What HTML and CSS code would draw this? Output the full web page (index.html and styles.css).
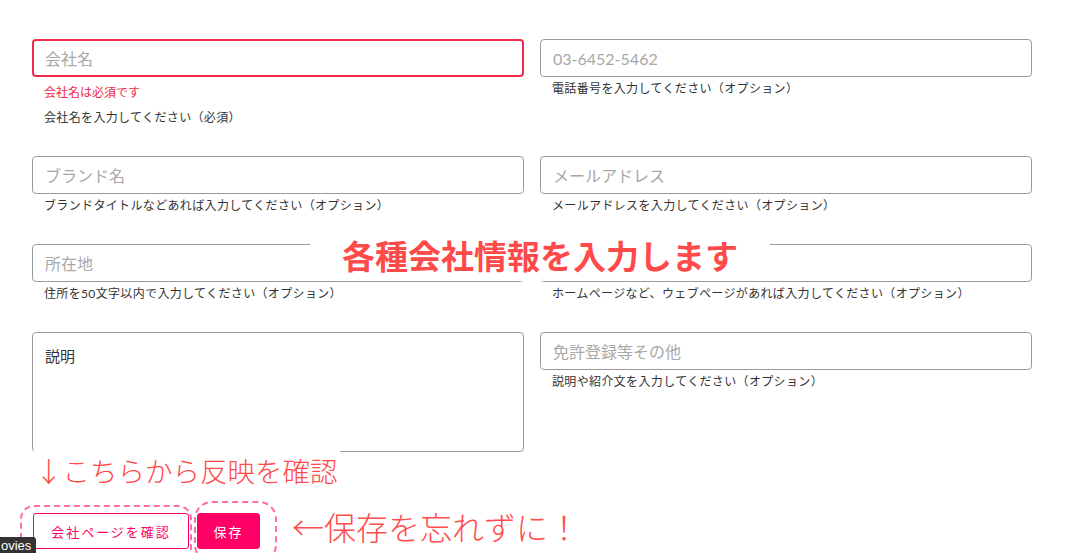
FILE: index.html
```html
<!DOCTYPE html>
<html lang="ja">
<head>
    <meta name="viewport" content="width=device-width,initial-scale=1.0">
    <title>会社情報</title>
    <link rel="stylesheet" href="styles.css">
</head>
<body>

    <div class="page">
        <form class="company-form">
            <div class="field">
                <input class="input is-error" type="text" placeholder="会社名">
                <p class="error">会社名は必須です</p>
                <p class="help help-after-error">会社名を入力してください（必須）</p>
            </div>
            <div class="field">
                <input class="input" type="text" placeholder="03-6452-5462">
                <p class="help">電話番号を入力してください（オプション）</p>
            </div>

            <div class="field">
                <input class="input" type="text" placeholder="ブランド名">
                <p class="help">ブランドタイトルなどあれば入力してください（オプション）</p>
            </div>
            <div class="field">
                <input class="input" type="text" placeholder="メールアドレス">
                <p class="help">メールアドレスを入力してください（オプション）</p>
            </div>

            <div class="field">
                <input class="input" type="text" placeholder="所在地">
                <p class="help">住所を50文字以内で入力してください（オプション）</p>
            </div>
            <div class="field">
                <input class="input" type="text" placeholder="">
                <p class="help">ホームページなど、ウェブページがあれば入力してください（オプション）</p>
            </div>

            <div class="field">
                <textarea class="input textarea">説明</textarea>
            </div>
            <div class="field">
                <input class="input" type="text" placeholder="免許登録等その他">
                <p class="help">説明や紹介文を入力してください（オプション）</p>
            </div>
        </form>

        <div class="actions">
            <button class="btn btn-outline" type="button">会社ページを確認</button>
            <button class="btn btn-primary" type="button">保存</button>
            <span class="note note-save">←保存を忘れずに！</span>
        </div>

        <!-- annotations laid over the form -->
        <div class="callout callout-main">各種会社情報を入力します</div>
        <div class="callout callout-check">↓こちらから反映を確認</div>
        <div class="ring ring-check"></div>
        <div class="ring ring-save"></div>
        <div class="tooltip">ovies</div>
    </div>

</body>
</html>
```

FILE: styles.css
```css
body {
    margin: 0;
    background: #fff;
    font-family: Lato, "Noto Sans CJK JP", sans-serif;
    color: #333;
}

.page {
    position: relative;
    padding: 39px 48px 0 32px;
    height: 553px;
    box-sizing: border-box;
    overflow: hidden;
}

.company-form {
    display: grid;
    grid-template-columns: 492px 492px;
    column-gap: 16px;
    row-gap: 28px;
}

.field p {
    margin: 0;
}

.input {
    display: block;
    width: 100%;
    height: 38px;
    box-sizing: border-box;
    padding: 0 12px;
    border: 1px solid #9a9a9a;
    border-radius: 4px;
    font-family: Lato, "Noto Sans CJK JP", sans-serif;
    font-size: 16px;
    color: #333;
    background: #fff;
    outline: none;
}

.input::placeholder {
    color: #a8a8a8;
}

.input.is-error {
    border: 2px solid #f0284a;
    padding: 0 11px;
}

.textarea {
    height: 120px;
    padding: 12px;
    font-size: 15px;
    line-height: 22px;
    resize: none;
}

.help {
    padding: 2px 0 0 12px;
    font-size: 12px;
    line-height: 20px;
    letter-spacing: 0.35px;
    color: #333;
}

.error {
    margin-top: 6px !important;
    padding-left: 12px;
    font-size: 12px;
    line-height: 20px;
    color: #f0284a;
}

.help-after-error {
    margin-top: 3px !important;
}

.actions {
    display: flex;
    align-items: center;
    gap: 8px;
    margin-top: 61px;
    margin-left: 1px;
}

.btn {
    height: 36px;
    box-sizing: border-box;
    border-radius: 3px;
    font-family: "Noto Sans CJK JP", sans-serif;
    font-size: 13px;
    letter-spacing: 2px;
    cursor: pointer;
}

.btn-outline {
    width: 156px;
    background: #fff;
    border: 1px solid #ff0066;
    color: #ff0066;
}

.btn-primary {
    width: 63px;
    background: #ff0066;
    border: 1px solid #ff0066;
    color: #fff;
}

.note {
    font-family: "Noto Sans CJK JP", sans-serif;
    font-weight: 300;
    color: #ff4d4d;
}

.note-save {
    margin-left: 24px;
    margin-top: -10px;
    font-size: 32px;
    white-space: nowrap;
}

.callout {
    position: absolute;
    background: #fff;
    font-family: "Noto Sans CJK JP", sans-serif;
    color: #ff4a4a;
    white-space: nowrap;
}

.callout-main {
    left: 310px;
    top: 229px;
    width: 460px;
    height: 52px;
    line-height: 52px;
    text-align: center;
    font-size: 33px;
    font-weight: 700;
}

.callout-check {
    left: 34px;
    top: 450px;
    width: 306px;
    height: 40px;
    line-height: 40px;
    padding-left: 1px;
    box-sizing: border-box;
    font-size: 27.5px;
    font-weight: 300;
}

.ring {
    position: absolute;
    border: 2px dashed #ff6fa4;
    box-sizing: border-box;
}

.ring-check {
    left: 20px;
    top: 505px;
    width: 172px;
    height: 58px;
    border-radius: 14px;
}

.ring-save {
    left: 194px;
    top: 501px;
    width: 83px;
    height: 62px;
    border-radius: 18px;
}

.tooltip {
    position: absolute;
    left: -4px;
    top: 537px;
    padding: 0 5px 0 5px;
    height: 18px;
    line-height: 17px;
    background: #333;
    border-radius: 3px;
    font-family: "Liberation Sans", sans-serif;
    font-size: 13px;
    color: #fff;
}
```
